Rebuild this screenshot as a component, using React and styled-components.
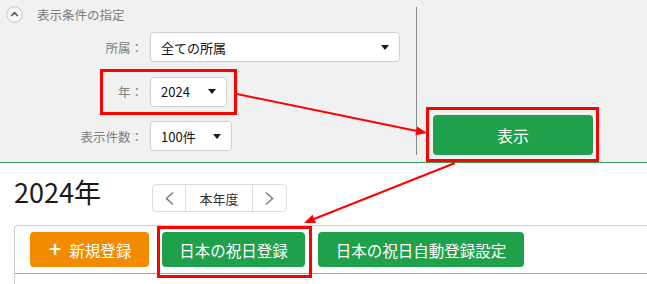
import React from "react";
import styled, { createGlobalStyle } from "styled-components";

const GlobalStyle = createGlobalStyle`
  html, body { margin: 0; padding: 0; background: #fff; }
  body { font-family: "Noto Sans CJK JP", "Noto Sans", sans-serif; color: #222; }
`;

const Page = styled.div`
  position: relative;
  width: 647px;
  height: 284px;
  overflow: hidden;
  background: #fff;
`;

const FilterPanel = styled.div`
  display: flex;
  height: 163px;
  background: #f1f1f1;
  border-bottom: 1px solid #3f9c55;
  box-sizing: border-box;
`;

const FilterLeft = styled.div`
  width: 416px;
  padding: 6px 0 0 6px;
  box-sizing: border-box;
`;

const PanelHeader = styled.div`
  display: flex;
  align-items: center;
  gap: 14px;
  height: 17px;
`;

const HeaderText = styled.span`
  font-size: 12.5px;
  color: #7a7a7a;
  line-height: 14px;
`;

const FormGrid = styled.div`
  margin-top: 9px;
  display: grid;
  grid-template-columns: 137px auto;
  column-gap: 7px;
  row-gap: 14.5px;
  align-items: center;
`;

const Label = styled.div`
  text-align: right;
  font-size: 12.5px;
  color: #808080;
  white-space: nowrap;
`;

const Select = styled.div`
  width: ${(p) => p.$w}px;
  height: 30px;
  box-sizing: border-box;
  border: 1px solid #cfcfcf;
  border-radius: 4px;
  background: #fff;
  display: flex;
  align-items: center;
  justify-content: space-between;
  padding: 0 10px;
  font-size: 13px;
  color: #111;
`;

const Caret = styled.span`
  width: 0;
  height: 0;
  border-left: 4px solid transparent;
  border-right: 4px solid transparent;
  border-top: 5px solid #1a1a1a;
`;

const ActionCol = styled.div`
  margin: 7px 0 7px;
  border-left: 1px solid #8a8a8a;
  padding-left: 16px;
  display: flex;
  align-items: flex-end;
`;

const PrimaryButton = styled.button`
  width: 160px;
  height: 40px;
  border: none;
  border-radius: 4px;
  background: #1fa04b;
  color: #fff;
  font-family: inherit;
  font-size: 16px;
  padding: 0;
`;

const Content = styled.div`
  padding: 21px 0 0 14px;
`;

const TitleRow = styled.div`
  display: flex;
  align-items: flex-start;
`;

const Title = styled.h1`
  margin: -6px 0 0;
  width: 138px;
  font-size: 27px;
  line-height: 28px;
  font-weight: 400;
  color: #1a1a1a;
`;

const NavGroup = styled.div`
  display: flex;
  height: 28px;
  border: 1px solid #dcdcdc;
  border-radius: 4px;
  box-sizing: border-box;
  background: #fff;
`;

const NavCell = styled.div`
  width: ${(p) => p.$w}px;
  display: flex;
  align-items: center;
  justify-content: center;
  font-size: 13px;
  color: #333;
  & + & {
    border-left: 1px solid #dcdcdc;
  }
`;

const TabPanel = styled.div`
  margin-top: 13px;
  border-top: 1px solid #cfcfcf;
  border-left: 1px solid #cfcfcf;
  border-top-left-radius: 4px;
  min-height: 70px;
`;

const Toolbar = styled.div`
  display: flex;
  gap: 13px;
  padding: 6px 0 6px 15px;
  border-bottom: 1px solid #a8a8a8;
`;

const ActionButton = styled.button`
  height: 35px;
  border: none;
  border-radius: 4px;
  padding: 0 ${(p) => p.$px || 17}px;
  background: ${(p) => (p.$variant === "orange" ? "#f28b00" : "#1fa04b")};
  color: #fff;
  font-family: inherit;
  font-size: 15.5px;
  display: flex;
  align-items: center;
  gap: 7px;
  white-space: nowrap;
`;

const PlusMark = styled.span`
  font-family: "DejaVu Sans", sans-serif;
  font-weight: 700;
  font-size: 17px;
  line-height: 1;
`;

const Highlight = styled.div`
  position: absolute;
  left: ${(p) => p.$x}px;
  top: ${(p) => p.$y}px;
  width: ${(p) => p.$w}px;
  height: ${(p) => p.$h}px;
  border: 3px solid #ff0000;
  box-sizing: border-box;
  pointer-events: none;
`;

const ArrowLayer = styled.svg`
  position: absolute;
  left: 0;
  top: 0;
  pointer-events: none;
`;

const ToggleIcon = () => (
  <svg width="17" height="17" viewBox="0 0 17 17">
    <circle cx="8.5" cy="8.5" r="7.8" fill="#f8f8f8" stroke="#c4c4c4" strokeWidth="1" />
    <polyline points="5.2,10 8.5,6.7 11.8,10" fill="none" stroke="#555" strokeWidth="1.7" />
  </svg>
);

const Chevron = ({ dir }) => (
  <svg width="9" height="15" viewBox="0 0 9 15">
    <polyline
      points={dir === "left" ? "8,1.5 1.5,7.5 8,13.5" : "1,1.5 7.5,7.5 1,13.5"}
      fill="none"
      stroke="#808080"
      strokeWidth="1.6"
    />
  </svg>
);

export default function App() {
  return (
    <Page>
      <GlobalStyle />
      <FilterPanel>
        <FilterLeft>
          <PanelHeader>
            <ToggleIcon />
            <HeaderText>表示条件の指定</HeaderText>
          </PanelHeader>
          <FormGrid>
            <Label>所属：</Label>
            <Select $w={250}>
              <span>全ての所属</span>
              <Caret />
            </Select>
            <Label>年：</Label>
            <Select $w={77}>
              <span>2024</span>
              <Caret />
            </Select>
            <Label>表示件数：</Label>
            <Select $w={82}>
              <span>100件</span>
              <Caret />
            </Select>
          </FormGrid>
        </FilterLeft>
        <ActionCol>
          <PrimaryButton>表示</PrimaryButton>
        </ActionCol>
      </FilterPanel>
      <Content>
        <TitleRow>
          <Title>2024年</Title>
          <NavGroup>
            <NavCell $w={32}>
              <Chevron dir="left" />
            </NavCell>
            <NavCell $w={66}>本年度</NavCell>
            <NavCell $w={33}>
              <Chevron dir="right" />
            </NavCell>
          </NavGroup>
        </TitleRow>
        <TabPanel>
          <Toolbar>
            <ActionButton $variant="orange" $px={18}>
              <PlusMark>+</PlusMark>新規登録
            </ActionButton>
            <ActionButton>日本の祝日登録</ActionButton>
            <ActionButton $px={18}>日本の祝日自動登録設定</ActionButton>
          </Toolbar>
        </TabPanel>
      </Content>

      <Highlight $x={100} $y={69} $w={137} $h={46} />
      <Highlight $x={426} $y={107} $w={173} $h={55} />
      <Highlight $x={157} $y={226} $w={155} $h={52} />

      <ArrowLayer width="647" height="284" viewBox="0 0 647 284">
        <line x1="237" y1="94" x2="417" y2="131" stroke="#ff0000" strokeWidth="2" />
        <polygon points="427,133 415.3,135.2 417.1,126.4" fill="#ff0000" />
        <line x1="455" y1="163" x2="314" y2="219" stroke="#ff0000" strokeWidth="2" />
        <polygon points="304,223 315.9,223.1 312.5,214.8" fill="#ff0000" />
      </ArrowLayer>
    </Page>
  );
}
